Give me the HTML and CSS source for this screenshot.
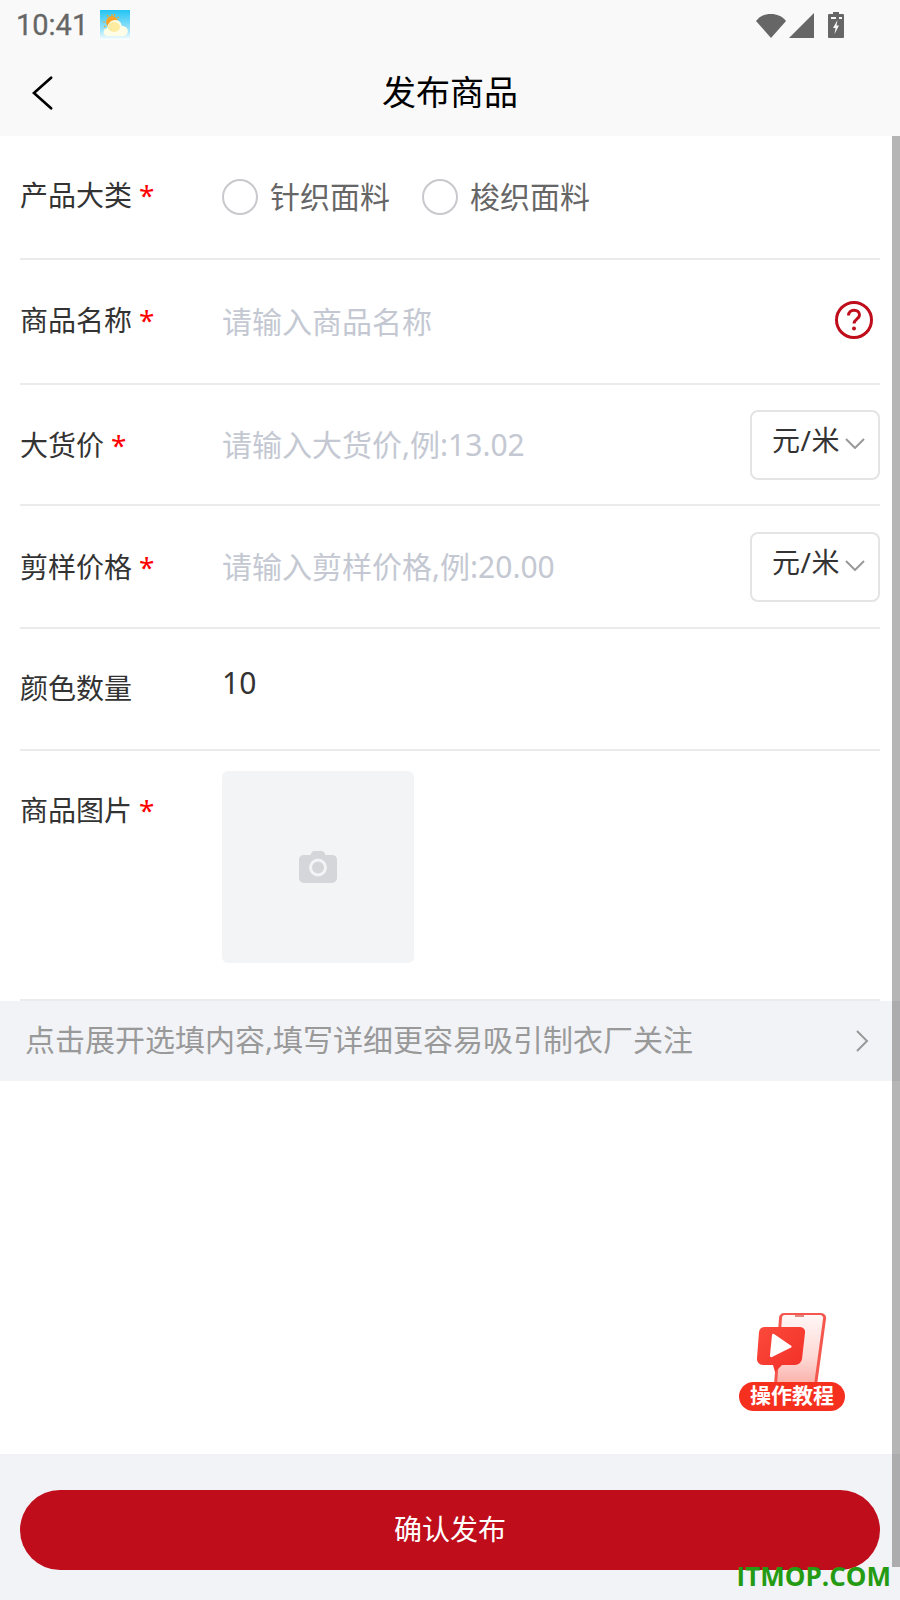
FILE: index.html
```html
<!DOCTYPE html>
<html lang="zh-CN">
<head>
    <meta charset="UTF-8">
    <meta name="viewport" content="width=device-width, initial-scale=1.0">
    <title>发布商品</title>
    <link rel="stylesheet" href="styles.css">
</head>
<body>

<div class="page">
    <div class="status-bar">
        <span class="time">10:41</span>
        <svg class="weather" viewBox="0 0 30 30">
            <defs>
                <linearGradient id="sky" x1="0" y1="0" x2="0" y2="1">
                    <stop offset="0" stop-color="#22c4f4"/>
                    <stop offset="0.7" stop-color="#a6e6fb"/>
                    <stop offset="1" stop-color="#ffffff"/>
                </linearGradient>
            </defs>
            <rect width="30" height="30" fill="url(#sky)"/>
            <g stroke="#f5a623" stroke-width="1.2">
                <path d="M12 4V6M15 4l-.8 2M7 5l1.300 1.600M19 7l-1.500 1M3 12h2M4 17l1.500-1"/>
            </g>
            <circle cx="12" cy="12" r="6" fill="#f6a32a"/>
            <path d="M8 26c-3 0-4.500-2-4.500-4 0-2.300 1.800-3.700 3.800-3.700 .3-4 3-8.300 8-8.300 4 0 6.200 3 6.500 6 3 0 6 1.800 6 5 0 3-2.300 5-5 5z" fill="#fffde6"/>
            <ellipse cx="14" cy="17" rx="6" ry="5" fill="#fdeba0"/>
        </svg>
        <div class="status-icons">
            <svg class="wifi" viewBox="0 0 30 25"><path d="M15 25L0 8C4 3 9 1 15 1s11 2 15 7z"/></svg>
            <svg class="signal" viewBox="0 0 25 25"><path d="M25 0v25H0z"/></svg>
            <svg class="battery" viewBox="0 0 16 26">
                <path d="M5 0h6v2h4a1 1 0 0 1 1 1v22a1 1 0 0 1-1 1H1a1 1 0 0 1-1-1V3a1 1 0 0 1 1-1h4z"/>
                <path d="M3 5h5v2H3zM11 5h3v2h-3z" fill="#f9f9f9"/>
                <path d="M9.500 8L5 16h2.500L6.500 22l4.500-8.500H8.500z" fill="#f9f9f9"/>
            </svg>
        </div>
    </div>

    <div class="nav-bar">
        <svg class="back" viewBox="0 0 22 36"><path d="M20 2L2 18l18 16"/></svg>
        <h1 class="nav-title">发布商品</h1>
    </div>

    <div class="form">
        <div class="row row-type">
            <div class="label">产品大类<span class="star">*</span></div>
            <label class="radio"><span class="radio-dot"></span><span class="radio-text">针织面料</span></label>
            <label class="radio"><span class="radio-dot"></span><span class="radio-text">梭织面料</span></label>
        </div>
        <div class="row row-name">
            <div class="label">商品名称<span class="star">*</span></div>
            <div class="placeholder">请输入商品名称</div>
            <svg class="help" viewBox="0 0 38 38">
                <circle cx="19" cy="19" r="17.500" fill="none" stroke="#bf0d1b" stroke-width="3"/>
                <path d="M13.500 14.500c0-3.500 2.500-5.300 5.500-5.300s5.500 1.800 5.500 4.800c0 4-5.500 4.300-5.500 8.500" fill="none" stroke="#bf0d1b" stroke-width="3"/>
                <circle cx="19" cy="27.500" r="2" fill="#bf0d1b"/>
            </svg>
        </div>
        <div class="row row-price">
            <div class="label">大货价<span class="star">*</span></div>
            <div class="placeholder">请输入大货价,例:13.02</div>
            <div class="unit">元/米<svg class="caret" viewBox="0 0 20 11"><path d="M1 1l9 9 9-9"/></svg></div>
        </div>
        <div class="row row-sample">
            <div class="label">剪样价格<span class="star">*</span></div>
            <div class="placeholder">请输入剪样价格,例:20.00</div>
            <div class="unit">元/米<svg class="caret" viewBox="0 0 20 11"><path d="M1 1l9 9 9-9"/></svg></div>
        </div>
        <div class="row row-color">
            <div class="label">颜色数量</div>
            <div class="value">10</div>
        </div>
        <div class="row row-image">
            <div class="label">商品图片<span class="star">*</span></div>
            <div class="upload">
                <svg class="camera" viewBox="0 0 38 32">
                    <path d="M5 4h6.500l1.200-2.500A3 3 0 0 1 15.500 0h7a3 3 0 0 1 2.800 1.500L26.500 4H33a5 5 0 0 1 5 4v19a5 5 0 0 1-5 5H5a5 5 0 0 1-5-5V8a5 5 0 0 1 5-4z"/>
                    <circle cx="19" cy="16.500" r="7.500" fill="#d5d6d9" stroke="#f3f4f6" stroke-width="3"/>
                </svg>
            </div>
        </div>
    </div>

    <div class="expand">
        <span class="expand-text">点击展开选填内容,填写详细更容易吸引制衣厂关注</span>
        <svg class="arrow" viewBox="0 0 13 22"><path d="M1 1l10 10L1 21"/></svg>
    </div>

    <div class="spacer"></div>

    <div class="footer">
        <button class="submit">确认发布</button>
    </div>

    <div class="scrollbar"></div>

    <div class="tutorial">
        <svg class="tutorial-art" viewBox="0 0 74 74">
            <defs>
                <linearGradient id="screen" x1="0" y1="0" x2="0" y2="1">
                    <stop offset="0" stop-color="#fff6f5"/>
                    <stop offset="0.6" stop-color="#fdd9d5"/>
                    <stop offset="1" stop-color="#fab0a9"/>
                </linearGradient>
                <linearGradient id="bubble" x1="0" y1="0" x2="1" y2="1">
                    <stop offset="0" stop-color="#fb4a3c"/>
                    <stop offset="1" stop-color="#f22f27"/>
                </linearGradient>
            </defs>
            <path d="M28 2h37a5 5 0 0 1 5 6l-9 66H18l5-67a5 5 0 0 1 5-5z" fill="#f4574e"/>
            <path d="M29 4h35a3 3 0 0 1 3 4l-9 66H21l5-67a3 3 0 0 1 3-3z" fill="url(#screen)"/>
            <path d="M39 5h9" stroke="#d9605a" stroke-width="1.500"/>
            <path d="M8 16h36a5 5 0 0 1 5 6l-3 26a7 7 0 0 1-7 6H26l-7 7-2-7H7a6 6 0 0 1-6-7l2-26a6 6 0 0 1 5-5z" fill="url(#bubble)"/>
            <path d="M16 24a1.500 1.500 0 0 1 2-1l16 11a1.500 1.500 0 0 1 0 3l-18 9a1.500 1.500 0 0 1-2-2z" fill="#fff"/>
        </svg>
        <div class="tutorial-tag">操作教程</div>
    </div>

    <div class="watermark">ITMOP.COM</div>
</div>

</body>
</html>
```

FILE: styles.css
```css
* {
    box-sizing: border-box;
}

body {
    margin: 0;
    font-family: "Noto Sans", "Noto Sans CJK SC", sans-serif;
    color: #333;
    background-color: white;
}

.page {
    position: relative;
    width: 900px;
    height: 1600px;
    display: flex;
    flex-direction: column;
    overflow: hidden;
}

/* status bar and title */
.status-bar {
    height: 50px;
    display: flex;
    align-items: center;
    padding: 0 56px 0 16px;
    background-color: #f9f9f9;
}

.time {
    font-family: Roboto, sans-serif;
    font-size: 29px;
    color: #666;
    -webkit-text-stroke: 0.3px #666;
}

.weather {
    width: 30px;
    height: 30px;
    margin-left: 12px;
}

.status-icons {
    margin-left: auto;
    display: flex;
    align-items: flex-end;
}

.status-icons svg {
    display: block;
    fill: #666;
}

.wifi {
    width: 30px;
    height: 25px;
}

.signal {
    width: 25px;
    height: 25px;
    margin-left: 3px;
}

.battery {
    width: 16px;
    height: 26px;
    margin-left: 14px;
}

.nav-bar {
    position: relative;
    height: 86px;
    display: flex;
    align-items: center;
    justify-content: center;
    background-color: #f9f9f9;
}

.back {
    position: absolute;
    left: 32px;
    top: 25px;
    width: 21px;
    height: 36px;
    fill: none;
    stroke: #000;
    stroke-width: 2.800;
    stroke-linecap: round;
}

.nav-title {
    margin: 0 0 6px;
    font-size: 34px;
    font-weight: 400;
    color: #000;
}

/* form rows */
.form {
    padding: 0 20px;
}

.row {
    display: flex;
    align-items: center;
    border-bottom: 2px solid #ebebeb;
}

.row-type {
    height: 124px;
}

.row-name {
    height: 125px;
}

.row-price {
    height: 121px;
}

.row-sample {
    height: 123px;
}

.row-color {
    height: 122px;
}

.row-image {
    height: 250px;
    align-items: flex-start;
    padding-top: 20px;
}

.label {
    width: 202px;
    flex-shrink: 0;
    font-size: 28px;
    line-height: 40px;
    color: #333;
}

.row-type .label,
.row-name .label {
    margin-bottom: 4px;
}

.row-color .label {
    margin-bottom: 2px;
}

.row-image .label {
    margin-top: 19px;
}

.star {
    margin-left: 7px;
    font-size: 28px;
    color: #f00;
}

.radio {
    display: flex;
    align-items: center;
    margin-right: 32px;
    font-size: 30px;
    color: #666;
}

.radio-dot {
    width: 36px;
    height: 36px;
    margin-right: 12px;
    border: 2px solid #c8c9cc;
    border-radius: 50%;
}

.radio-text {
    margin-bottom: 4px;
}

.placeholder {
    flex: 1;
    margin-bottom: 4px;
    font-size: 30px;
    color: #c4c8d2;
}

.help {
    width: 38px;
    height: 38px;
    margin: 0 7px 3px 0;
}

.unit {
    width: 130px;
    height: 70px;
    display: flex;
    padding: 10px 0 0 20px;
    border: 2px solid #e4e4e4;
    border-radius: 8px;
    font-size: 28px;
    line-height: 36px;
    letter-spacing: 0.5px;
    color: #333;
}

.caret {
    width: 20px;
    height: 11px;
    margin: 16px 0 0 5px;
    fill: none;
    stroke: #999;
    stroke-width: 2;
}

.value {
    margin-bottom: 14px;
    font-size: 30px;
    color: #333;
}

.upload {
    width: 192px;
    height: 192px;
    display: flex;
    align-items: center;
    justify-content: center;
    background-color: #f3f4f6;
    border-radius: 6px;
}

.camera {
    width: 38px;
    height: 32px;
    fill: #d5d6d9;
}

/* optional section bar */
.expand {
    height: 80px;
    display: flex;
    align-items: center;
    justify-content: space-between;
    padding: 0 31px 0 25px;
    background-color: #f2f3f7;
    font-size: 30px;
    color: #999;
}

.expand-text {
    margin-bottom: 6px;
}

.arrow {
    width: 13px;
    height: 22px;
    fill: none;
    stroke: #999;
    stroke-width: 2;
}

.spacer {
    flex: 1;
}

.footer {
    height: 146px;
    padding: 36px 20px 0;
    background-color: #f2f3f7;
}

.submit {
    width: 100%;
    height: 80px;
    padding-bottom: 6px;
    border: none;
    border-radius: 40px;
    background-color: #bf0d1b;
    color: white;
    font-family: inherit;
    font-size: 28px;
}

.scrollbar {
    position: absolute;
    right: 0;
    top: 136px;
    width: 8px;
    height: 1431px;
    background-color: rgba(0, 0, 0, 0.29);
}

/* floating tutorial button */
.tutorial {
    position: absolute;
    left: 739px;
    top: 1311px;
    width: 106px;
    height: 100px;
}

.tutorial-art {
    position: absolute;
    left: 17px;
    top: 0;
    width: 74px;
    height: 74px;
    filter: blur(0.6px);
}

.tutorial-tag {
    position: absolute;
    left: 0;
    bottom: 0;
    width: 106px;
    height: 29px;
    border-radius: 15px;
    background-color: #f5301f;
    color: white;
    font-size: 21px;
    font-weight: 700;
    line-height: 27px;
    text-align: center;
}

.watermark {
    position: absolute;
    right: 9px;
    top: 1558px;
    font-family: "Open Sans", sans-serif;
    font-size: 26px;
    font-weight: 700;
    line-height: 36px;
    color: #259a13;
}
```
